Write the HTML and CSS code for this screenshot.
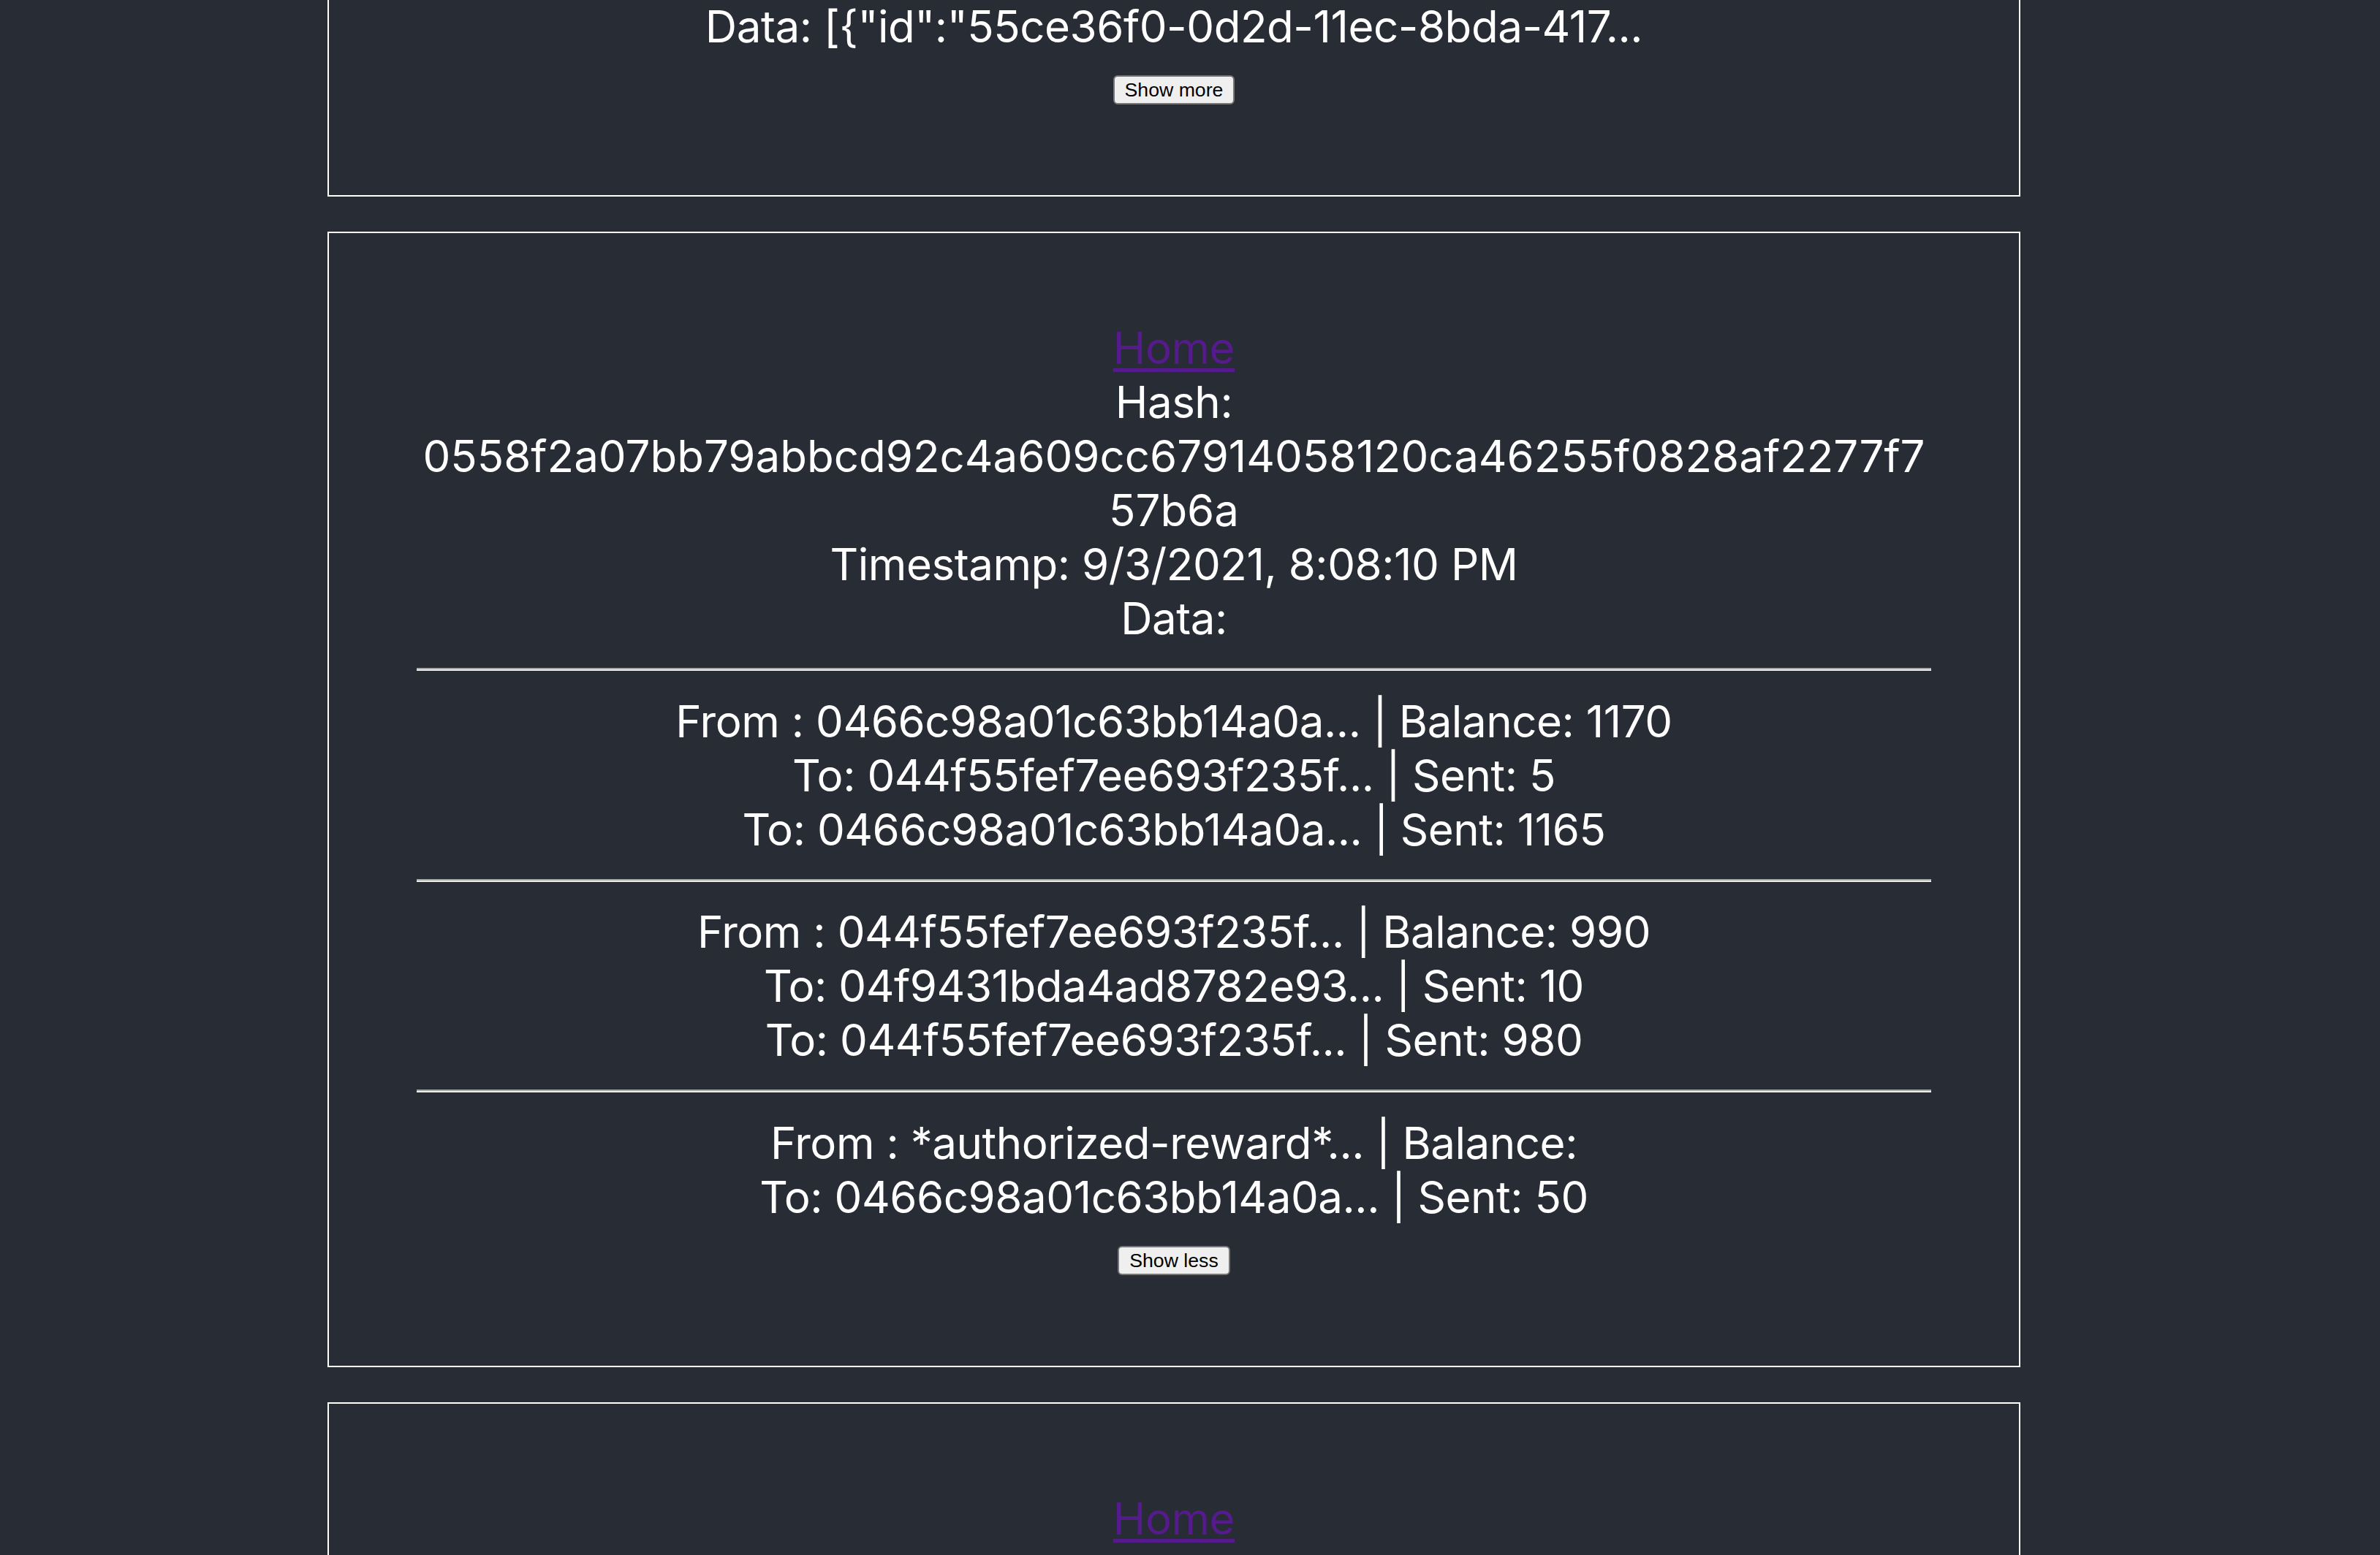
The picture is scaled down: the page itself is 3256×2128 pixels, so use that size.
FILE: index.html
```html
<!DOCTYPE html>
<html lang="en">
<head>
<meta charset="utf-8">
<title>Blocks</title>
<link rel="stylesheet" href="styles.css">
</head>
<body>
<main class="feed">
  <section class="block">
    <div class="line"><a class="home" href="#">Home</a></div>
    <div class="line wrap">Hash: <span class="hash">00a4c1e6f03b2d9e7c5a18f4b6d2e90c3a7f51b8d4e26c09f7a3b5d1e8c4f620</span></div>
    <div class="line">Timestamp: 9/3/2021, 8:07:42 PM</div>
    <div class="line">Data: [{"id":"55ce36f0-0d2d-11ec-8bda-417...</div>
    <div class="line"><button class="toggle" type="button">Show more</button></div>
  </section>

  <section class="block">
    <div class="line"><a class="home" href="#">Home</a></div>
    <div class="line wrap">Hash: <span class="hash">0558f2a07bb79abbcd92c4a609cc67914058120ca46255f0828af2277f757b6a</span></div>
    <div class="line">Timestamp: 9/3/2021, 8:08:10 PM</div>
    <div class="line">Data:</div>
    <hr class="sep">
    <div class="tx">
      <div class="line">From : 0466c98a01c63bb14a0a... | Balance: 1170</div>
      <div class="line">To: 044f55fef7ee693f235f... | Sent: 5</div>
      <div class="line">To: 0466c98a01c63bb14a0a... | Sent: 1165</div>
    </div>
    <hr class="sep">
    <div class="tx">
      <div class="line">From : 044f55fef7ee693f235f... | Balance: 990</div>
      <div class="line">To: 04f9431bda4ad8782e93... | Sent: 10</div>
      <div class="line">To: 044f55fef7ee693f235f... | Sent: 980</div>
    </div>
    <hr class="sep">
    <div class="tx">
      <div class="line">From : *authorized-reward*... | Balance: </div>
      <div class="line">To: 0466c98a01c63bb14a0a... | Sent: 50</div>
    </div>
    <div class="line"><button class="toggle" type="button">Show less</button></div>
  </section>

  <section class="block">
    <div class="line"><a class="home" href="#">Home</a></div>
    <div class="line wrap">Hash: <span class="hash">009b6e2f4c81a7d35e0f92b6c4a18d7e3f50c2b9a6d41e87f3c05b2a9d6e14f8</span></div>
    <div class="line">Timestamp: 9/3/2021, 8:09:31 PM</div>
    <div class="line">Data: [{"id":"7a1f03c0-0d2d-11ec-8bda-417...</div>
    <div class="line"><button class="toggle" type="button">Show more</button></div>
  </section>
</main>
</body>
</html>
```
FILE: styles.css
```css
html {
  background: #282c34;
}
body {
  margin: 0;
  background: #282c34;
  color: #ffffff;
  font-family: Inter, "Noto Sans", sans-serif;
  font-size: 60px;
  line-height: 74px;
  letter-spacing: -0.45px;
  overflow: hidden;
}
.feed {
  width: 2316px;
  margin: -493px 0 0 448px;
  display: flex;
  flex-direction: column;
  gap: 48px;
}
.block {
  border: 2px solid #ffffff;
  padding: 120px;
  text-align: center;
}
.line {
  min-height: 74px;
}
.wrap {
  overflow-wrap: break-word;
}
.hash {
  letter-spacing: 0;
}
.home {
  color: #551a8b;
  text-decoration: underline;
  text-decoration-thickness: 5px;
  text-underline-offset: 6px;
}
.sep {
  margin: 31.28px 0;
  height: 0;
  border: 0;
  border-top: 2px solid #a9a9a9;
  border-bottom: 2px solid #eeeeee;
}
.toggle {
  font-family: "Liberation Sans", Arial, sans-serif;
  font-size: 26.67px;
  line-height: 32px;
  letter-spacing: 0;
  padding: 2px 14px;
  border: 2px solid #767676;
  border-radius: 6px;
  background: #efefef;
  color: #000000;
  vertical-align: baseline;
}
```
